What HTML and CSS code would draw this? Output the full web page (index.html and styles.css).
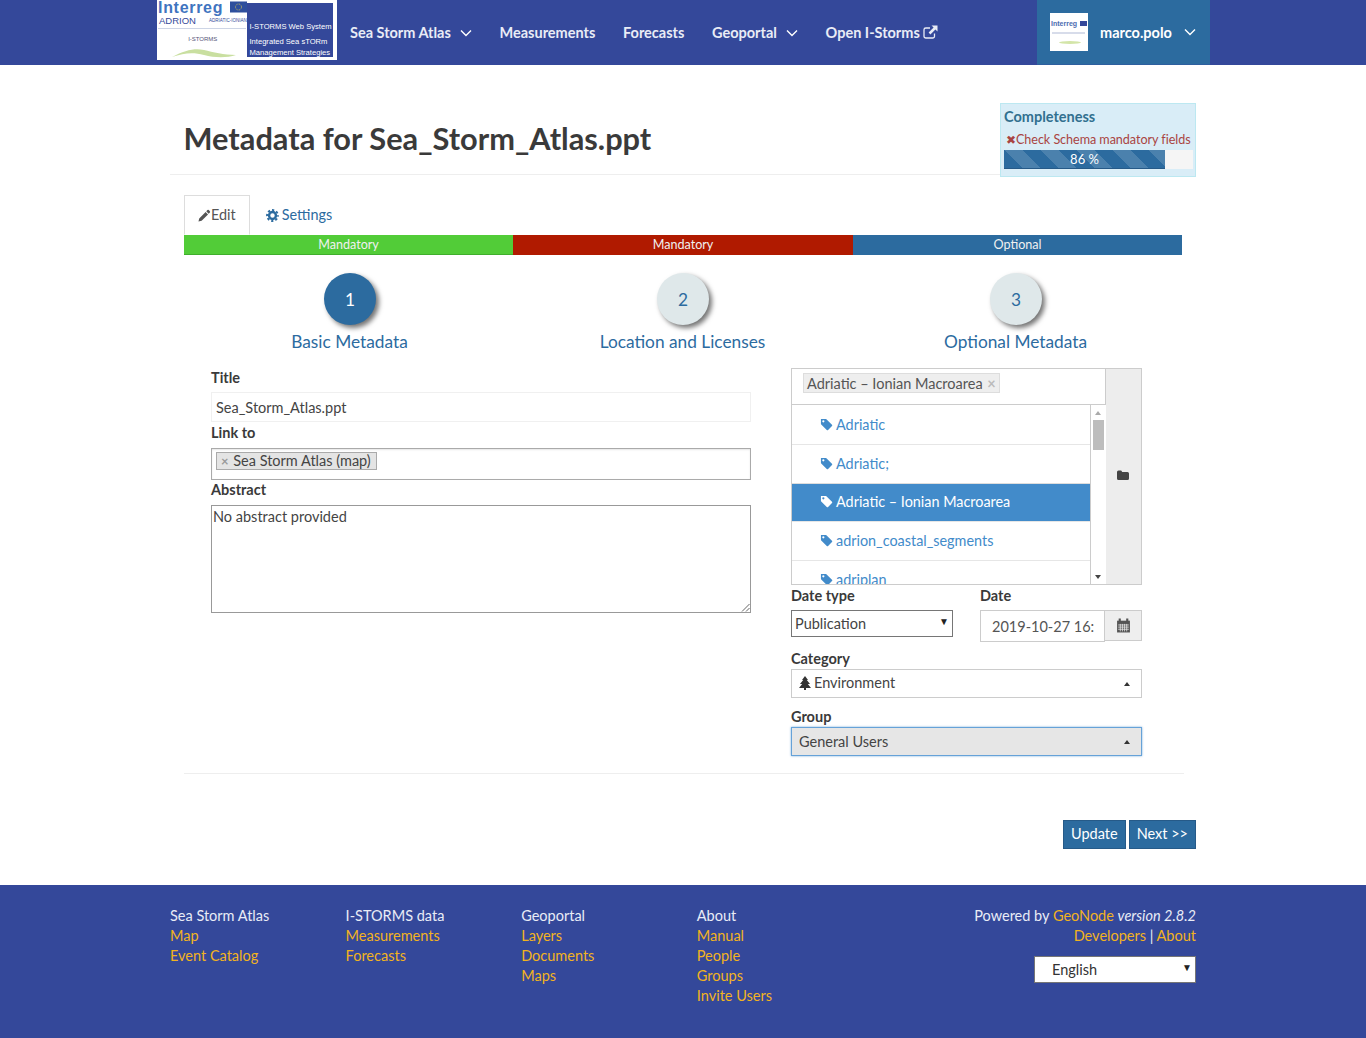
FILE: index.html
```html
<!DOCTYPE html>
<html lang="en">
<head>
<meta charset="utf-8">
<title>Metadata for Sea_Storm_Atlas.ppt</title>
<link rel="stylesheet" href="styles.css">
</head>
<body>
<svg class="defs" width="0" height="0" aria-hidden="true">
  <defs>
    <symbol id="chev" viewBox="0 0 12 8"><path d="M1 1.500l5 5 5-5" fill="none" stroke="currentColor" stroke-width="1.400"/></symbol>
    <symbol id="tag" viewBox="0 0 14 14"><path d="M1 1h5.200a1 1 0 0 1 .7.3l6 6a1 1 0 0 1 0 1.400l-4.200 4.200a1 1 0 0 1-1.400 0l-6-6a1 1 0 0 1-.3-.7zM3.600 2.400a1.200 1.200 0 1 0 0 2.400 1.200 1.200 0 0 0 0-2.400z" fill="currentColor" fill-rule="evenodd"/></symbol>
  </defs>
</svg>
<header class="topbar">
  <div class="topbar-inner">
    <div class="logo">
      <div class="logo-left">
        <div class="logo-inter">Interreg</div>
        <svg class="logo-flag" viewBox="0 0 17 11"><rect width="17" height="11" fill="#2f4f9d"/><circle cx="8.500" cy="5.500" r="3" fill="none" stroke="#e8d24a" stroke-width=".8" stroke-dasharray=".8 .8"/></svg>
        <div class="logo-adrion">ADRION</div>
        <div class="logo-adri">ADRIATIC-IONIAN</div>
        <div class="logo-line"></div>
        <div class="logo-istorms">I-STORMS</div>
        <svg class="logo-wave" viewBox="0 0 66 14"><path d="M1 12C14 5 24 3 33 5s20 5 32 5c-9 3-21 3-32 0S13 8 1 12z" fill="#c9dfa0"/></svg>
      </div>
      <div class="logo-right">
        <span>I-STORMS Web System</span>
        <span class="logo-gap">Integrated Sea sTORm</span>
        <span>Management Strategies</span>
      </div>
    </div>
    <nav class="nav">
      <a class="nav-item nav-atlas">Sea Storm Atlas <svg class="chev"><use href="#chev"/></svg></a>
      <a class="nav-item">Measurements</a>
      <a class="nav-item">Forecasts</a>
      <a class="nav-item">Geoportal <svg class="chev"><use href="#chev"/></svg></a>
      <a class="nav-item nav-open">Open I-Storms<svg class="ext" viewBox="0 0 15 14"><path d="M11.500 8.500v2.700a1.800 1.800 0 0 1-1.800 1.800H2.800A1.800 1.800 0 0 1 1 11.200V4.800A1.800 1.800 0 0 1 2.800 3H7" fill="none" stroke="currentColor" stroke-width="1.300"/><path d="M8.500 0.500h6v6l-2.100-2.100-5 5-1.800-1.800 5-5z" fill="currentColor"/></svg></a>
    </nav>
    <div class="user">
      <div class="avatar">
        <span class="av-inter">Interreg</span>
        <span class="av-flag"></span>
        <span class="av-line"></span>
        <span class="av-wave"></span>
      </div>
      <span class="user-name">marco.polo</span>
      <svg class="chev"><use href="#chev"/></svg>
    </div>
  </div>
</header>

<main class="page">
  <div class="page-head">
    <h1>Metadata for Sea_Storm_Atlas.ppt</h1>
    <aside class="complete">
      <h4>Completeness</h4>
      <p class="complete-msg"><span class="x">✖</span>Check Schema mandatory fields</p>
      <div class="progress"><div class="progress-bar" style="width:85.200%">86 %</div></div>
    </aside>
  </div>

  <div class="tabs">
    <a class="tab tab-active"><svg class="ic14" viewBox="0 0 14 14"><path d="M10.200 1.200a1 1 0 0 1 1.400 0l1.200 1.200a1 1 0 0 1 0 1.400l-1.300 1.300-2.600-2.600zM8.200 3.200l2.600 2.600-6.900 6.900L.5 13.500l.8-3.400z" fill="currentColor"/></svg>Edit</a>
    <a class="tab tab-settings"><svg class="ic14 gear" viewBox="0 0 14 14"><circle cx="7" cy="7" r="3.700" fill="none" stroke="currentColor" stroke-width="2.600"/><circle cx="7" cy="7" r="5.900" fill="none" stroke="currentColor" stroke-width="2" stroke-dasharray="2.400 2.234" stroke-dashoffset="1.200"/></svg>Settings</a>
  </div>
  <div class="steps-bar">
    <div class="seg seg-green">Mandatory</div>
    <div class="seg seg-red">Mandatory</div>
    <div class="seg seg-blue">Optional</div>
  </div>
  <div class="steps">
    <div class="step step-on"><span class="circle">1</span><span class="step-label">Basic Metadata</span></div>
    <div class="step"><span class="circle">2</span><span class="step-label">Location and Licenses</span></div>
    <div class="step"><span class="circle">3</span><span class="step-label">Optional Metadata</span></div>
  </div>

  <div class="form">
    <div class="col-left">
      <label class="lbl">Title</label>
      <div class="input-title">Sea_Storm_Atlas.ppt</div>
      <label class="lbl lbl-link">Link to</label>
      <div class="multi"><span class="chip"><span class="chip-x">×</span> Sea Storm Atlas (map)</span></div>
      <label class="lbl lbl-abs">Abstract</label>
      <div class="textarea">No abstract provided
        <svg class="grip" viewBox="0 0 9 9"><path d="M8.500 1L1 8.500M8.500 5L5 8.500" stroke="#666" fill="none"/></svg>
      </div>
    </div>
    <div class="col-right">
      <div class="tree">
        <div class="tree-main">
          <div class="tree-input"><span class="tchip">Adriatic – Ionian Macroarea <span class="tchip-x">×</span></span></div>
          <div class="tree-listwrap">
            <ul class="tree-list">
              <li><svg class="tag"><use href="#tag"/></svg>Adriatic</li>
              <li><svg class="tag"><use href="#tag"/></svg>Adriatic;</li>
              <li class="sel"><svg class="tag"><use href="#tag"/></svg>Adriatic – Ionian Macroarea</li>
              <li><svg class="tag"><use href="#tag"/></svg>adrion_coastal_segments</li>
              <li><svg class="tag"><use href="#tag"/></svg>adriplan</li>
            </ul>
            <div class="sbar"><span class="arr-up"></span><span class="thumb"></span><span class="arr-down"></span></div>
          </div>
        </div>
        <div class="tree-side"><svg class="folder" viewBox="0 0 14 12"><path d="M1 3a1.500 1.500 0 0 1 1.500-1.500h2.700l1 1.500h5.300A1.500 1.500 0 0 1 13 4.500v5A1.500 1.500 0 0 1 11.500 11h-9A1.500 1.500 0 0 1 1 9.500z" fill="currentColor"/></svg></div>
      </div>
      <div class="date-row">
        <div class="date-type">
          <label class="lbl">Date type</label>
          <div class="native-select">Publication<span class="sel-arrow">▼</span></div>
        </div>
        <div class="date-field">
          <label class="lbl">Date</label>
          <div class="date-group">
            <div class="date-input">2019-10-27 16:</div>
            <div class="date-btn"><svg class="cal" viewBox="0 0 14 14"><path d="M1 2.500h12V13.500H1z" fill="#555"/><path d="M3.500 .5v3M10.500 .5v3" stroke="#555" stroke-width="2"/><path d="M2 6.500h10M2 8.500h10M2 10.500h10M4 5.500v7M6 5.500v7M8 5.500v7M10 5.500v7" stroke="#eee" stroke-width=".7"/></svg></div>
          </div>
        </div>
      </div>
      <label class="lbl lbl-cat">Category</label>
      <div class="drop"><svg class="tree-ic" viewBox="0 0 12 14"><path d="M6 0l3 4H7.800L11 8H8.800L12 12H7v2H5v-2H0l3.200-4H1l3.200-4H3z" fill="currentColor"/></svg>Environment<span class="caret"></span></div>
      <label class="lbl lbl-group">Group</label>
      <div class="drop drop-focus">General Users<span class="caret"></span></div>
    </div>
  </div>
  <hr class="rule">
  <div class="actions">
    <a class="btn">Update</a>
    <a class="btn">Next &gt;&gt;</a>
  </div>
</main>

<footer class="footer">
  <div class="footer-inner">
    <div class="fcol"><span>Sea Storm Atlas</span><a>Map</a><a>Event Catalog</a></div>
    <div class="fcol"><span>I-STORMS data</span><a>Measurements</a><a>Forecasts</a></div>
    <div class="fcol"><span>Geoportal</span><a>Layers</a><a>Documents</a><a>Maps</a></div>
    <div class="fcol"><span>About</span><a>Manual</a><a>People</a><a>Groups</a><a>Invite Users</a></div>
    <div class="fright">
      <div>Powered by <a>GeoNode</a> <em>version 2.8.2</em></div>
      <div><a>Developers</a> | <a>About</a></div>
      <div class="lang">English<span class="sel-arrow">▼</span></div>
    </div>
  </div>
</footer>
</body>
</html>
```
FILE: styles.css
```css
* { box-sizing: border-box; }
html, body { margin: 0; padding: 0; }
body { font-family: Lato, "Open Sans", sans-serif; font-size: 14.500px; line-height: 20px; color: #333; background: #fff; height: 1038px; display: flex; flex-direction: column; }
.defs { display: block; height: 0; }
a { color: inherit; text-decoration: none; }

.topbar { height: 65px; background: #34489a; flex: none; }
.topbar-inner { width: 1053px; margin-left: 157px; height: 65px; display: flex; }
.logo { width: 180px; height: 60px; background: #fff; display: flex; padding: 0 4px 0 1px; color: #34489a; flex: none; overflow: hidden; }
.logo-left { width: 90px; height: 60px; position: relative; }
.logo-inter { font: 700 16px/16px "Liberation Sans", sans-serif; letter-spacing: .7px; color: #3f74c0; }
.logo-flag { position: absolute; left: 72px; top: 1px; width: 17px; height: 12px; }
.logo-adrion { font: 400 9.500px/10px "Liberation Sans", sans-serif; color: #34489a; padding-left: 1px; }
.logo-adri { position: absolute; left: 51px; top: 18px; font: 400 4.500px/6px "Liberation Sans", sans-serif; color: #34489a; white-space: nowrap; }
.logo-line { height: 1px; background: #cdd5e6; margin: 2px 0 0 0; width: 88px; }
.logo-istorms { font: 400 6px/8px "Liberation Sans", sans-serif; color: #557; text-align: center; margin-top: 6px; }
.logo-wave { display: block; width: 66px; height: 14px; margin: 2px 0 0 13px; }
.logo-right { width: 86px; height: 54px; margin-top: 3px; background: #34489a; color: #fff; display: flex; flex-direction: column; padding-top: 18px; font: 400 7.600px/11px "Liberation Sans", sans-serif; white-space: nowrap; padding-left: 2px; }
.logo-right span { display: block; height: 11px; }
.logo-right .logo-gap { margin-top: 4px; }
.nav { display: flex; align-items: center; height: 65px; padding-left: 13px; font-size: 14.500px; font-weight: 700; color: #e9ecf6; flex: 1; }
.nav-item { display: flex; align-items: center; white-space: nowrap; margin-right: 27.700px; gap: 9px; }
.nav-open { gap: 3px; }
.chev { width: 12px; height: 8px; color: #fff; flex: none; }
.ext { width: 15px; height: 14px; margin-top: -2px; }
.user { width: 173px; height: 65px; background: #2c6b9f; display: flex; align-items: center; padding-left: 13px; color: #fff; font-weight: 700; flex: none; border-bottom: 1px solid #2e5f9f; }
.avatar { width: 38px; height: 38px; background: #fff; position: relative; overflow: hidden; flex: none; margin-right: 12px; }
.av-inter { position: absolute; left: 1px; top: 7px; font: 700 7px/8px "Liberation Sans", sans-serif; color: #4b6cb0; }
.av-flag { position: absolute; left: 30px; top: 8px; width: 7px; height: 5px; background: #34489a; }
.av-line { position: absolute; left: 2px; top: 19px; width: 33px; height: 2px; background: #d7dcea; }
.av-wave { position: absolute; left: 9px; top: 28px; width: 22px; height: 3px; background: #d3e5a8; border-radius: 50%; }
.user-name { font-size: 14.500px; margin: 2px 12px 0 0; }

.page { width: 1026px; margin-left: 170px; flex: none; height: 820px; }
.page-head { display: flex; justify-content: space-between; height: 110px; padding-top: 38px; align-items: flex-start; position: relative; }
.page-head::after { content: ""; position: absolute; left: 0; right: 196px; top: 109px; height: 1px; background: #eee; }
h1 { font-size: 30.750px; line-height: 36px; font-weight: 700; margin: 18px 0 0 13.500px; color: #3a3a3a; white-space: nowrap; }
.complete { width: 196px; height: 74px; background: #d9edf7; border: 1px solid #bce8f1; padding: 3px 3px 0 3px; flex: none; }
.complete h4 { margin: 0; font-size: 14.500px; line-height: 20px; font-weight: 700; color: #31708f; }
.complete-msg { margin: 3px 0 0; font-size: 12.600px; line-height: 20px; color: #a94442; white-space: nowrap; padding-left: 2px; letter-spacing: -.05px; }
.x { font-size: 12px; }
.progress { height: 19px; margin-top: 0; width: 189px; background: #f5f5f5; }
.progress-bar { height: 19px; background-color: #2c6b9f; border-bottom: 1px solid #265a88; color: #fff; font-size: 13px; line-height: 19px; text-align: center; background-image: linear-gradient(45deg, rgba(255,255,255,.15) 25%, transparent 25%, transparent 50%, rgba(255,255,255,.15) 50%, rgba(255,255,255,.15) 75%, transparent 75%, transparent); background-size: 36px 36px; }

.tabs { display: flex; margin: 20px 0 0 14px; height: 40px; }
.tab { display: flex; align-items: center; height: 40px; padding: 0 13px 0 13px; color: #2c6b9f; border: 1px solid transparent; font-size: 14.400px; }
.tab-settings { padding-left: 14px; }
.tab-active { color: #555; background: #fff; border-color: #ddd; border-bottom-color: transparent; margin-right: 1px; }
.ic14 { width: 13px; height: 13px; flex: none; }
.gear { margin-right: 3px; }
.steps-bar { display: grid; grid-template-columns: 329px 340px 329px; margin-left: 14px; width: 998px; height: 20px; font-size: 12.600px; line-height: 19px; text-align: center; color: #f0f0f0; }
.seg-green { background: #52cc38; border-bottom: 1px solid #3fae2c; }
.seg-red { background: #b01a00; }
.seg-blue { background: #2c6b9f; }
.steps { display: grid; grid-template-columns: repeat(3, 333px); margin: 18px 0 0 13px; width: 999px; text-align: center; }
.step { display: flex; flex-direction: column; align-items: center; color: #2c6b9f; }
.circle { width: 52px; height: 52px; border-radius: 50%; background: #dfe8ea; color: #2c6b9f; font-size: 17.300px; display: flex; align-items: center; justify-content: center; padding: 1px 0 0 1px; box-shadow: 3px 3px 5px rgba(0,0,0,.55); }
.step-on .circle { background: #2c6b9f; color: #fff; }
.step-label { font-size: 17.300px; line-height: 24px; margin-top: 5px; }

.form { display: flex; margin: 14px 0 0 41px; height: 405px; }
.col-left { width: 540px; margin: -1px 40px 0 0; flex: none; }
.lbl { display: block; height: 20px; padding-top: 1px; font-weight: 700; line-height: 20px; color: #3a3a3a; font-size: 14.500px; }
.input-title { margin-top: 5px; height: 30px; border: 1px solid #f0f0f0; padding: 4px 4px; line-height: 22px; color: #444; }
.multi { margin-top: 6px; height: 32px; border: 1px solid #aaa; box-shadow: inset 0 1px 2px rgba(0,0,0,.1); padding: 3px 4px; }
.chip { display: inline-block; height: 18px; line-height: 15px; background: #e4e4e4; border: 1px solid #aaa; padding: 0 5px 0 4px; color: #444; vertical-align: top; }
.chip-x { color: #999; font-weight: 700; font-size: 13px; margin-right: 1px; }
.lbl-abs { margin-top: -1px; }
.textarea { position: relative; margin-top: 6px; height: 108px; border: 1px solid #999; padding: 1px 1px 0; line-height: 20px; color: #444; }
.grip { position: absolute; right: 0; bottom: 0; width: 9px; height: 9px; }

.col-right { width: 351px; flex: none; }
.tree { display: flex; height: 217px; border: 1px solid #ccc; background: #ededed; overflow: hidden; }
.tree-main { width: 314px; background: #fff; flex: none; }
.tree-input { height: 36px; border-right: 1px solid #ccc; border-bottom: 1px solid #ccc; padding: 4px 11px; }
.tchip { display: inline-block; height: 20px; line-height: 19px; background: #eee; border: 1px solid #ddd; padding: 0 3px; color: #555; white-space: nowrap; vertical-align: top; }
.tchip-x { color: #bbb; font-weight: 700; margin-left: 1px; }
.tree-listwrap { display: flex; height: 180px; overflow: hidden; }
.tree-list { list-style: none; margin: 0; padding: 0; width: 299px; border-right: 1px solid #ccc; flex: none; color: #428bca; font-size: 14.400px; }
.tree-list li { height: 39px; padding: 9px 0 0 28px; border-bottom: 1px solid #e6e6e6; line-height: 20px; white-space: nowrap; }
.tree-list li:first-child { height: 40px; padding-top: 10px; }
.tree-list li.sel { background: #428bca; color: #fff; border-top: 1px solid #ddd; padding-top: 8px; margin-top: -1px; }
.tag { width: 13px; height: 13px; margin-right: 3px; vertical-align: -1px; }
.sbar { width: 15px; position: relative; background: #fff; flex: none; }
.thumb { position: absolute; left: 2px; top: 15px; width: 11px; height: 30px; background: #bdbdbd; }
.arr-up, .arr-down { position: absolute; left: 4px; width: 0; height: 0; border-left: 3.500px solid transparent; border-right: 3.500px solid transparent; }
.arr-up { top: 6px; border-bottom: 4px solid #aaa; }
.arr-down { bottom: 6px; border-top: 4px solid #444; }
.tree-side { flex: 1; display: flex; align-items: center; justify-content: center; padding: 0 2px 4px 0; }
.folder { width: 14px; height: 12px; color: #444; }
.date-row { display: flex; height: 58px; }
.date-type { width: 189px; }
.native-select { position: relative; margin-top: 5px; width: 162px; height: 27px; border: 1px solid #767676; padding: 2px 3px; line-height: 22px; color: #444; background: #fff; }
.sel-arrow { position: absolute; right: 3px; top: 1px; font-size: 10px; color: #222; line-height: 18px; }
.date-field { width: 162px; }
.date-group { display: flex; margin-top: 5px; height: 32px; }
.date-input { width: 125px; height: 32px; border: 1px solid #ccc; padding: 5px 10px 0 11px; line-height: 22px; color: #555; white-space: nowrap; overflow: clip; overflow-clip-margin: content-box; }
.date-btn { width: 37px; height: 31px; background: #eee; border: 1px solid #ccc; border-left: 0; display: flex; align-items: center; justify-content: center; }
.cal { width: 15px; height: 15px; }
.lbl-cat { margin-top: 5px; }
.drop { position: relative; margin-top: 1px; height: 29px; border: 1px solid #ccc; padding: 3px 7px 5px; line-height: 21px; color: #444; display: flex; align-items: center; background: #fff; }
.tree-ic { width: 12px; height: 14px; margin: 0 3px 0 0; color: #333; flex: none; }
.caret { position: absolute; right: 11px; top: 12px; width: 0; height: 0; border-left: 3.500px solid transparent; border-right: 3.500px solid transparent; border-bottom: 4px solid #333; }
.lbl-group { margin-top: 8px; }
.drop-focus { background: #e6e6e6; border-color: #66a2d8; box-shadow: 0 0 2px rgba(66,139,202,.7); padding-top: 4px; padding-bottom: 4px; }
.rule { border: 0; height: 1px; background: #eee; margin: 0 12px 0 14px; }
.actions { display: flex; justify-content: flex-end; gap: 3px; margin-top: 46px; }
.btn { height: 29px; line-height: 25px; padding: 0 7px; background: #2c6b9f; color: #fff; border: 1px solid #265a88; font-size: 14.500px; }

.footer { flex: 1; background: #34489a; color: #e9ecf6; min-height: 153px; }
.footer-inner { width: 1026px; margin-left: 170px; display: flex; padding-top: 21px; }
.fcol { width: 175.600px; display: flex; flex-direction: column; line-height: 20px; flex: none; }
.fcol a, .fright a { color: #f2b31e; }
.fright { flex: 1; text-align: right; line-height: 20px; white-space: nowrap; }
.lang { position: relative; margin: 10px 0 0 auto; width: 162px; height: 27px; background: #fff; color: #333; text-align: left; padding: 2px 17px 3px; border: 1px solid #767676; line-height: 22px; }
```
